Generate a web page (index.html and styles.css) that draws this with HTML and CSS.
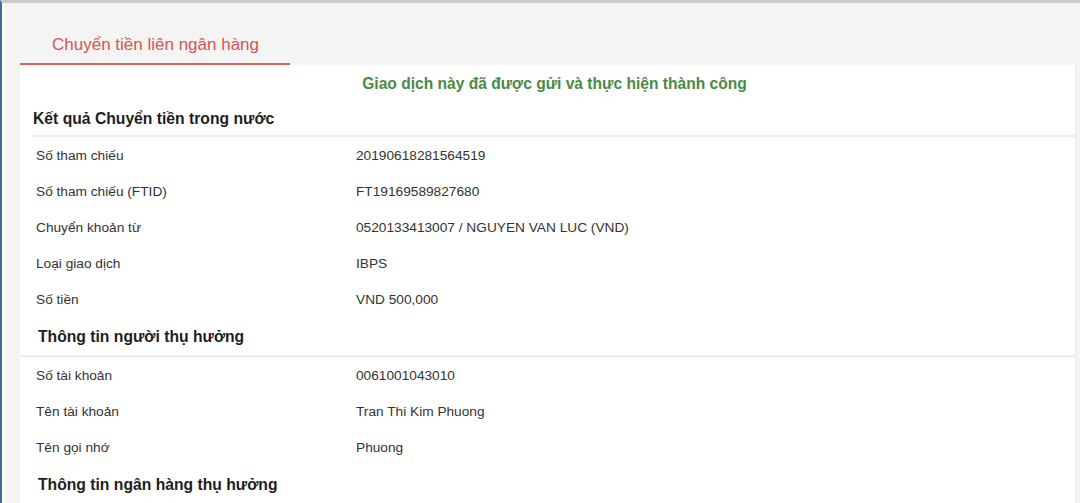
FILE: index.html
```html
<!DOCTYPE html>
<html lang="vi">
<head>
<meta charset="utf-8">
<title>Chuyển tiền liên ngân hàng</title>
<link rel="stylesheet" href="styles.css">
</head>
<body>
<div class="frame">
  <div class="tabs">
    <div class="tab tab--active">Chuyển tiền liên ngân hàng</div>
  </div>
  <div class="card">
    <div class="message">Giao dịch này đã được gửi và thực hiện thành công</div>

    <div class="section-title section-title--first">Kết quả Chuyển tiền trong nước</div>
    <div class="rows">
      <div class="row"><div class="label">Số tham chiếu</div><div class="value">20190618281564519</div></div>
      <div class="row"><div class="label">Số tham chiếu (FTID)</div><div class="value">FT19169589827680</div></div>
      <div class="row"><div class="label">Chuyển khoản từ</div><div class="value">0520133413007 / NGUYEN VAN LUC (VND)</div></div>
      <div class="row"><div class="label">Loại giao dịch</div><div class="value">IBPS</div></div>
      <div class="row"><div class="label">Số tiền</div><div class="value">VND 500,000</div></div>
    </div>

    <div class="section-title">Thông tin người thụ hưởng</div>
    <div class="rows">
      <div class="row"><div class="label">Số tài khoản</div><div class="value">0061001043010</div></div>
      <div class="row"><div class="label">Tên tài khoản</div><div class="value">Tran Thi Kim Phuong</div></div>
      <div class="row"><div class="label">Tên gọi nhớ</div><div class="value">Phuong</div></div>
    </div>

    <div class="section-title section-title--plain">Thông tin ngân hàng thụ hưởng</div>
  </div>
</div>
</body>
</html>
```

FILE: styles.css
```css
html, body {
  margin: 0;
  padding: 0;
}

body {
  background: #f4f4f4;
  font-family: "Liberation Sans", Arial, sans-serif;
  color: #333;
  overflow: hidden;
}

.frame {
  height: 503px;
  box-sizing: border-box;
  border-left: 2px solid #3f6c99;
  border-top: 3px solid #cbcbcb;
  padding: 0 4px 0 18px;
  box-shadow: inset 3px 0 0 #fafafa;
}

.tabs {
  display: flex;
}

.tab {
  width: 238px;
  padding: 32px 0 8px 32px;
  line-height: 20px;
  font-size: 17px;
  color: #d9534f;
  border-bottom: 2px solid #e0605c;
}

.card {
  background: #ffffff;
  border-right: 1px solid #ececec;
  height: 440px;
}

.message {
  padding-top: 9px;
  padding-left: 14px;
  line-height: 20px;
  text-align: center;
  font-size: 15.6px;
  font-weight: bold;
  color: #4b8a43;
  margin-bottom: 14px;
}

.section-title {
  line-height: 20px;
  font-size: 15.7px;
  font-weight: bold;
  color: #1e1e1e;
  padding: 10px 0 8px 18px;
  border-bottom: 2px solid #ececec;
  box-shadow: 0 1px 2px rgba(0, 0, 0, 0.04);
}

.section-title--first {
  margin-left: 12px;
  padding: 1px 0 6px 1px;
  border-bottom: 2px solid #ebebeb;
  box-shadow: none;
}

.section-title--plain {
  border-bottom: none;
  box-shadow: none;
}

.rows {
  display: flex;
  flex-direction: column;
}

.row {
  display: flex;
  align-items: center;
  height: 36px;
  font-size: 13.7px;
}

.label {
  width: 320px;
  padding-left: 16px;
  color: #333;
}

.value {
  color: #333;
}
```
